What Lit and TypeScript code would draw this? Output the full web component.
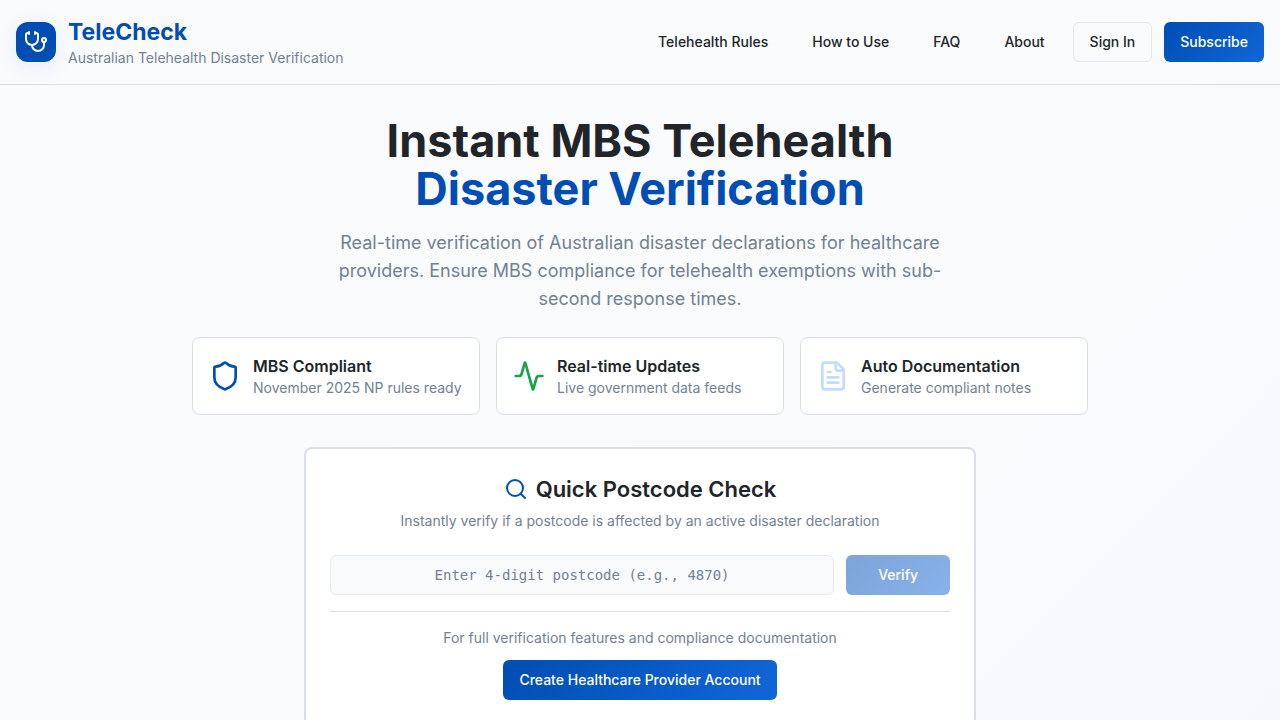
import { LitElement, html, css, svg } from "lit";
import { customElement, state } from "lit/decorators.js";

const icons = {
  stethoscope: svg`<path d="M11 2v2"/><path d="M5 2v2"/><path d="M5 3H4a2 2 0 0 0-2 2v4a6 6 0 0 0 12 0V5a2 2 0 0 0-2-2h-1"/><path d="M8 15a6 6 0 0 0 12 0v-3"/><circle cx="20" cy="10" r="2"/>`,
  shield: svg`<path d="M20 13c0 5-3.5 7.5-7.66 8.95a1 1 0 0 1-.67-.01C7.5 20.5 4 18 4 13V6a1 1 0 0 1 1-1c2 0 4.5-1.2 6.24-2.72a1.17 1.17 0 0 1 1.52 0C14.51 3.81 17 5 19 5a1 1 0 0 1 1 1z"/>`,
  activity: svg`<path d="M22 12h-2.48a2 2 0 0 0-1.93 1.46l-2.35 8.36a.25.25 0 0 1-.48 0L9.24 2.18a.25.25 0 0 0-.48 0l-2.35 8.36A2 2 0 0 1 4.49 12H2"/>`,
  fileText: svg`<path d="M15 2H6a2 2 0 0 0-2 2v16a2 2 0 0 0 2 2h12a2 2 0 0 0 2-2V7Z"/><path d="M14 2v4a2 2 0 0 0 2 2h4"/><path d="M10 9H8"/><path d="M16 13H8"/><path d="M16 17H8"/>`,
  search: svg`<circle cx="11" cy="11" r="8"/><path d="m21 21-4.3-4.3"/>`,
};

const icon = (name: keyof typeof icons, cls: string) => html`<svg
  class="icon ${cls}"
  viewBox="0 0 24 24"
  fill="none"
  stroke="currentColor"
  stroke-width="2"
  stroke-linecap="round"
  stroke-linejoin="round"
  aria-hidden="true"
>${icons[name]}</svg>`;

const links = ["Telehealth Rules", "How to Use", "FAQ", "About"];

const features = [
  { icon: "shield", tone: "primary", title: "MBS Compliant", text: "November 2025 NP rules ready" },
  { icon: "activity", tone: "success", title: "Real-time Updates", text: "Live government data feeds" },
  { icon: "fileText", tone: "soft", title: "Auto Documentation", text: "Generate compliant notes" },
] as const;

@customElement("app-root")
export class AppRoot extends LitElement {
  @state() private postcode = "";

  static styles = css`
    :host {
      --primary: #004db3;
      --primary-light: #1166d8;
      --ink: #212529;
      --muted: #738191;
      --line: #d8dfe9;
      --surface: #f9fafc;
      display: block;
      min-height: 100vh;
      color: var(--ink);
      background: linear-gradient(135deg, #f9fbfd 0%, #f9fafc 70%, #f6f8fd 100%);
      font-family: Inter, "Liberation Sans", sans-serif;
      font-size: 14px;
      line-height: 20px;
    }
    *, *::before, *::after { box-sizing: border-box; }
    h1, h2, h3, p { margin: 0; }
    .icon { display: block; flex: none; }
    .icon-lg { width: 32px; height: 32px; }
    .icon-md { width: 24px; height: 24px; }
    .primary { color: var(--primary); }
    .success { color: #16a34a; }
    .soft { color: #c2dcff; }
    .muted { color: var(--muted); }

    .header {
      display: flex;
      align-items: center;
      justify-content: space-between;
      padding: 16px;
      background: var(--surface);
      border-bottom: 1px solid var(--line);
    }
    .brand { display: flex; align-items: center; gap: 12px; color: inherit; text-decoration: none; }
    .logo {
      display: grid;
      place-items: center;
      width: 40px;
      height: 40px;
      border-radius: 12px;
      color: #fff;
      background: var(--primary);
      box-shadow: 0 4px 20px rgba(0, 77, 179, 0.08);
    }
    .brand-name { display: block; font-size: 23px; line-height: 32px; font-weight: 700; color: var(--primary); }
    .brand-tag { display: block; color: var(--muted); }
    .nav { display: flex; align-items: center; gap: 12px; }
    .links { display: flex; gap: 12px; }
    .link {
      padding: 8px 16px;
      border-radius: 6px;
      color: inherit;
      font-weight: 500;
      text-decoration: none;
    }
    .btn {
      display: inline-flex;
      align-items: center;
      justify-content: center;
      height: 40px;
      padding: 0 16px;
      border: 0;
      border-radius: 6px;
      font: inherit;
      font-weight: 500;
      cursor: pointer;
    }
    .btn-outline { color: inherit; background: var(--surface); border: 1px solid #e6e9ed; }
    .btn-primary { color: #fff; background: linear-gradient(135deg, var(--primary), var(--primary-light)); }
    .btn-wide { padding: 0 32px; }
    .btn:disabled { opacity: 0.5; cursor: default; }

    .main { max-width: 928px; margin: 0 auto; padding: 32px 16px; }
    .hero { text-align: center; }
    .title { font-size: 45px; line-height: 48px; font-weight: 700; }
    .title-line { display: block; }
    .lead { max-width: 640px; margin: 16px auto 0; font-size: 18px; line-height: 28px; color: var(--muted); }

    .features { display: grid; grid-template-columns: repeat(3, 1fr); gap: 16px; margin-top: 24px; }
    .feature {
      display: flex;
      align-items: center;
      gap: 12px;
      padding: 16px;
      background: #fff;
      border: 1px solid var(--line);
      border-radius: 8px;
    }
    .feature-title { font-size: 16px; line-height: 24px; font-weight: 600; }

    .check {
      max-width: 672px;
      margin: 32px auto 0;
      padding: 24px;
      text-align: center;
      background: #fff;
      border: 2px solid var(--line);
      border-radius: 8px;
    }
    .check-title {
      display: flex;
      align-items: center;
      justify-content: center;
      gap: 8px;
      font-size: 22px;
      line-height: 32px;
      font-weight: 600;
    }
    .check-sub { margin-top: 6px; }
    .form { display: flex; gap: 12px; margin-top: 24px; padding-bottom: 16px; border-bottom: 1px solid var(--line); }
    .field {
      flex: 1;
      min-width: 0;
      height: 40px;
      padding: 8px 12px;
      color: inherit;
      background: var(--surface);
      border: 1px solid #e6e9ed;
      border-radius: 6px;
      font: 14px/20px "DejaVu Sans Mono", monospace;
      text-align: center;
    }
    .field::placeholder { color: var(--muted); opacity: 1; }
    .signup { display: grid; justify-items: center; gap: 12px; padding-top: 16px; }
  `;

  private onInput(e: Event) {
    this.postcode = (e.target as HTMLInputElement).value;
  }

  render() {
    return html`
      <header class="header">
        <a class="brand" href="#">
          <span class="logo">${icon("stethoscope", "icon-md")}</span>
          <span>
            <span class="brand-name">TeleCheck</span>
            <span class="brand-tag">Australian Telehealth Disaster Verification</span>
          </span>
        </a>
        <nav class="nav">
          <div class="links">${links.map((l) => html`<a class="link" href="#">${l}</a>`)}</div>
          <button class="btn btn-outline" type="button">Sign In</button>
          <button class="btn btn-primary" type="button">Subscribe</button>
        </nav>
      </header>
      <main class="main">
        <section class="hero">
          <h1 class="title">
            <span class="title-line">Instant MBS Telehealth</span>
            <span class="title-line primary">Disaster Verification</span>
          </h1>
          <p class="lead">
            Real-time verification of Australian disaster declarations for healthcare providers.
            Ensure MBS compliance for telehealth exemptions with sub-second response times.
          </p>
        </section>
        <section class="features">
          ${features.map(
            (f) => html`<article class="feature">
              ${icon(f.icon, `icon-lg ${f.tone}`)}
              <div>
                <h3 class="feature-title">${f.title}</h3>
                <p class="muted">${f.text}</p>
              </div>
            </article>`
          )}
        </section>
        <section class="check">
          <h2 class="check-title">${icon("search", "icon-md primary")}<span>Quick Postcode Check</span></h2>
          <p class="check-sub muted">Instantly verify if a postcode is affected by an active disaster declaration</p>
          <form class="form" @submit=${(e: Event) => e.preventDefault()}>
            <input
              class="field"
              type="text"
              inputmode="numeric"
              maxlength="4"
              aria-label="Postcode"
              placeholder="Enter 4-digit postcode (e.g., 4870)"
              .value=${this.postcode}
              @input=${this.onInput}
            />
            <button class="btn btn-primary btn-wide" type="submit" ?disabled=${!/^\d{4}$/.test(this.postcode)}>Verify</button>
          </form>
          <div class="signup">
            <p class="muted">For full verification features and compliance documentation</p>
            <button class="btn btn-primary" type="button">Create Healthcare Provider Account</button>
          </div>
        </section>
      </main>
    `;
  }
}
